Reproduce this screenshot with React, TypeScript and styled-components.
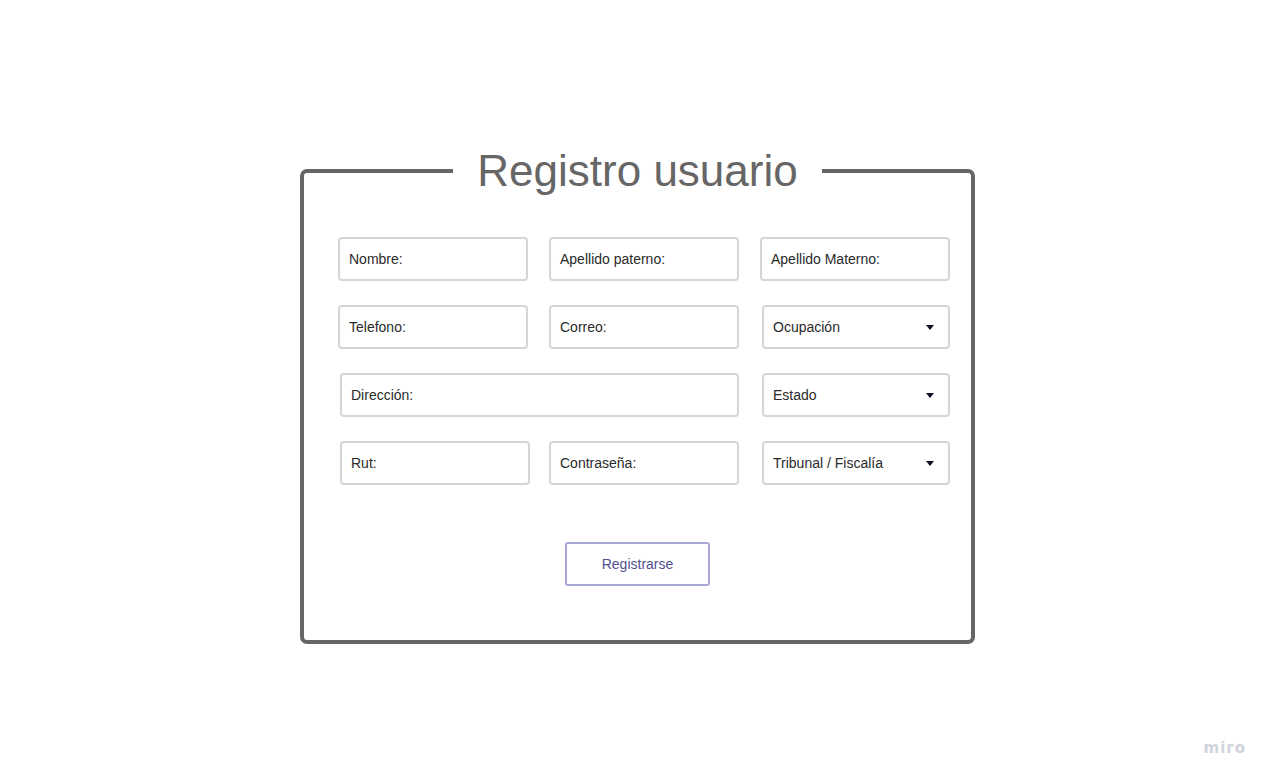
import React from "react";
import styled, { createGlobalStyle } from "styled-components";

const GlobalStyle = createGlobalStyle`
  html, body {
    margin: 0;
    padding: 0;
    background: #ffffff;
  }
  body {
    font-family: "Liberation Sans", Arial, sans-serif;
  }
`;

const Page = styled.div`
  position: relative;
  width: 1275px;
  height: 783px;
  padding: 146px 0 0 300px;
  box-sizing: border-box;
  overflow: hidden;
`;

const Frame = styled.fieldset`
  width: 675px;
  margin: 0;
  padding: 0 0 54px 0;
  box-sizing: border-box;
  border: 4px solid #666666;
  border-radius: 7px;
  min-width: 0;
`;

const Title = styled.legend`
  margin: 0 auto;
  padding: 0 24px;
  font-size: 44px;
  line-height: 50px;
  color: #666666;
  font-weight: normal;
`;

const FieldGrid = styled.div`
  display: grid;
  grid-template-columns: repeat(3, 190px);
  column-gap: 21px;
  row-gap: 24px;
  padding: 41px 21px 0 34px;
`;

const Field = styled.div<{ shift?: number; span?: number; trim?: number }>`
  grid-column: span ${(p) => p.span ?? 1};
  margin-left: ${(p) => p.shift ?? 0}px;
  margin-right: ${(p) => p.trim ?? 0}px;
  height: 44px;
  box-sizing: border-box;
  border: 2px solid #d6d6d6;
  border-radius: 4px;
  display: flex;
  align-items: center;
  justify-content: space-between;
  padding: 0 14px 0 9px;
  font-size: 14px;
  color: #2a2a2a;
  background: #ffffff;
`;

const Caret = styled.span`
  width: 0;
  height: 0;
  border-left: 4px solid transparent;
  border-right: 4px solid transparent;
  border-top: 5px solid #101028;
`;

const ButtonRow = styled.div`
  display: flex;
  justify-content: center;
  padding-top: 57px;
`;

const SubmitButton = styled.button`
  width: 145px;
  height: 44px;
  box-sizing: border-box;
  border: 2px solid #a8a8d8;
  border-radius: 3px;
  background: #ffffff;
  color: #50508e;
  font-family: "Liberation Sans", Arial, sans-serif;
  font-size: 14px;
  cursor: pointer;
`;

const Watermark = styled.div`
  position: absolute;
  right: 29px;
  bottom: 26px;
  font-family: "DejaVu Sans", sans-serif;
  font-weight: bold;
  font-size: 15px;
  letter-spacing: 1px;
  color: #d0d3dc;
`;

type FieldDef = { label: string; select?: boolean; shift?: number; span?: number; trim?: number };

const fields: FieldDef[] = [
  { label: "Nombre:" },
  { label: "Apellido paterno:" },
  { label: "Apellido Materno:" },
  { label: "Telefono:" },
  { label: "Correo:" },
  { label: "Ocupación", select: true, shift: 2 },
  { label: "Dirección:", span: 2, shift: 2 },
  { label: "Estado", select: true, shift: 2 },
  { label: "Rut:", shift: 2, trim: -2 },
  { label: "Contraseña:" },
  { label: "Tribunal / Fiscalía", select: true, shift: 2 },
];

export default function App() {
  return (
    <Page>
      <GlobalStyle />
      <Frame>
        <Title>Registro usuario</Title>
        <FieldGrid>
          {fields.map((f, i) => (
            <Field key={`field-${i}`} shift={f.shift} span={f.span} trim={f.trim}>
              <span>{f.label}</span>
              {f.select && <Caret />}
            </Field>
          ))}
        </FieldGrid>
        <ButtonRow>
          <SubmitButton>Registrarse</SubmitButton>
        </ButtonRow>
      </Frame>
      <Watermark>miro</Watermark>
    </Page>
  );
}
